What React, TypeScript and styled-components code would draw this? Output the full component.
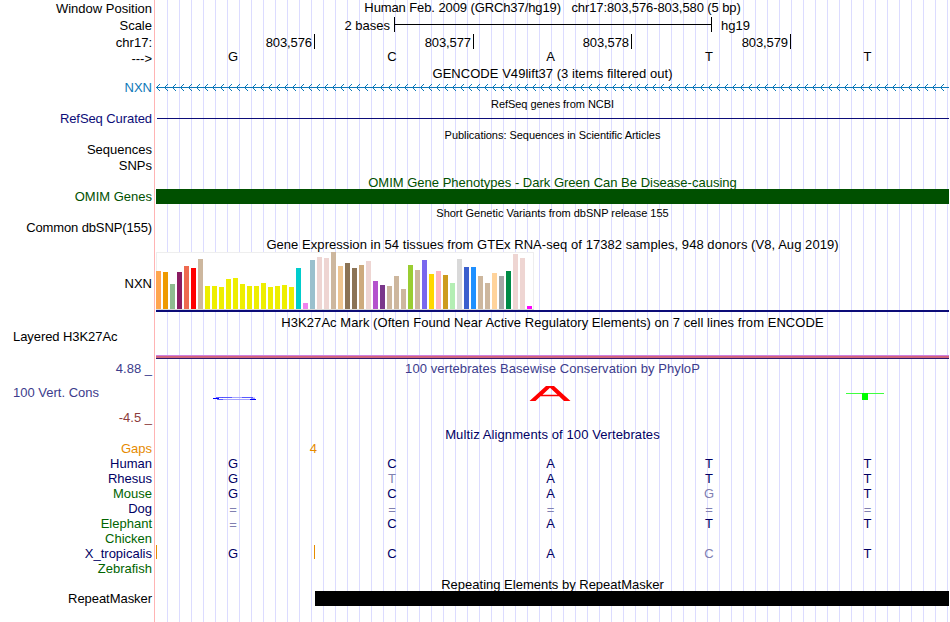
import type { ReactNode } from 'react'
import styled, { createGlobalStyle } from 'styled-components'

const NAVY = '#000064'
const FADED = '#8080b1'
const GREEN = '#006400'
const ORANGE = '#e68a00'
const COLUMNS = '159px 159px 158px 159px 158px'

const GTEX: [number, string][] = [
    [38, '#ffa54f'], [37, '#ee9a00'], [25, '#8fbc8f'], [37, '#8b1c62'], [43, '#ee6a50'], [41, '#ff0000'],
    [50, '#cdb79e'], [23, '#eeee00'], [23, '#eeee00'], [22, '#eeee00'], [30, '#eeee00'], [31, '#eeee00'],
    [25, '#eeee00'], [23, '#eeee00'], [23, '#eeee00'], [26, '#eeee00'], [22, '#eeee00'], [23, '#eeee00'],
    [24, '#eeee00'], [22, '#eeee00'], [41, '#00cdcd'], [6, '#ee82ee'], [49, '#9ac0cd'], [52, '#eed5d2'],
    [51, '#eed5d2'], [57, '#cdb79e'], [43, '#eec591'], [46, '#8b7355'], [41, '#8b7355'], [44, '#cdaa7d'],
    [48, '#eed5d2'], [28, '#b452cd'], [24, '#7a378b'], [23, '#cdb79e'], [33, '#cdb79e'], [20, '#cdb79e'],
    [44, '#9acd32'], [39, '#cdb79e'], [49, '#7a67ee'], [35, '#ffd700'], [38, '#ffb6c1'], [34, '#cd9b1d'],
    [26, '#b4eeb4'], [50, '#d9d9d9'], [42, '#3a5fcd'], [42, '#1e90ff'], [33, '#cdb79e'], [26, '#cdb79e'],
    [36, '#ffd39b'], [33, '#a6a6a6'], [38, '#008b45'], [55, '#eed5d2'], [51, '#eed5d2'], [3, '#ff00ff'],
]

// lower case marks a base that differs from human
const SPECIES = [
    { name: 'Human', color: NAVY, bases: 'GCATT' },
    { name: 'Rhesus', color: NAVY, bases: 'GtATT' },
    { name: 'Mouse', color: GREEN, bases: 'GCAgT' },
    { name: 'Dog', color: NAVY, bases: '=====' },
    { name: 'Elephant', color: GREEN, bases: '=CATT' },
    { name: 'Chicken', color: GREEN, bases: '' },
    { name: 'X_tropicalis', color: NAVY, bases: 'GCAcT', gaps: true },
    { name: 'Zebrafish', color: GREEN, bases: '' },
]

type RowProps = {
    height: number
    label?: string
    color?: string
    drop?: number
    left?: boolean
    spacing?: number
    children?: ReactNode
}

const Row = ({ height, label, color, drop, left, spacing, children }: RowProps) => (
    <RowWrap $height={height}>
        <Label $color={color} $drop={drop} $left={left} $spacing={spacing}>{label}</Label>
        <Plot>{children}</Plot>
    </RowWrap>
)

const Bases = ({ bases, color }: { bases: string; color?: string }) => (
    <BaseGrid>
        {bases.split('').map((b, i) => (
            <Base key={i} $drop={b === '=' ? 1 : 0} $color={b === '=' || b !== b.toUpperCase() ? FADED : color}>
                {b.toUpperCase()}
            </Base>
        ))}
    </BaseGrid>
)

const Arrows = () => (
    <Drawing width="793" height="15" shapeRendering="crispEdges">
        <defs>
            <pattern id="intron" width="8" height="15" patternUnits="userSpaceOnUse">
                <path d="M0 7h8v1h-8zM1 6h1v1h-1zM2 5h1v1h-1zM3 4h1v1h-1zM1 8h1v1h-1zM2 9h1v1h-1zM3 10h1v1h-1z" fill="#0c78b8" />
            </pattern>
        </defs>
        <rect width="793" height="15" fill="url(#intron)" />
    </Drawing>
)

const Logos = () => (
    <Drawing width="793" height="25">
        <path d="M62 12.500H96M62 14.500H94" stroke="#9a9aff" strokeWidth="0.9" />
        <path d="M66 12.500H76M86 12.500H97" stroke="#5050ff" strokeWidth="0.9" />
        <path d="M57 13.500H63M94 14.500H100" stroke="#0000ff" strokeWidth="1.2" />
        <path d="M60 12.500H67M61 14.500H67M95 13.200H99" stroke="#4646ff" strokeWidth="0.8" />
        <path d="M373.500 16L390 1H398L414.500 16H408L403 11.300H384.500L379.500 16ZM386.500 9.700H401.500L394 2.800Z" fill="#ff0000" fillRule="evenodd" />
        <path d="M690 8h38v1h-38z" fill="#40ff40" />
        <path d="M706 8h6v7h-6z" fill="#00ff00" />
    </Drawing>
)

const App = () => {
    return <Page>
        <GlobalStyle />
        <Row height={17} label="Window Position" drop={1}>
            <Title $spacing={-0.1}>Human Feb. 2009 (GRCh37/hg19)&nbsp;&nbsp; chr17:803,576-803,580 (5 bp)</Title>
        </Row>
        <Row height={17} label="Scale" drop={1}>
            <Scale>
                <ScaleText $width={234}>2 bases</ScaleText>
                <ScaleBar />
                <ScaleText $width={60}>hg19</ScaleText>
            </Scale>
        </Row>
        <Row height={15} label="chr17:" drop={1}>
            <Ticks>
                <Tick>803,576</Tick>
                <Tick>803,577</Tick>
                <Tick>803,578</Tick>
                <Tick>803,579</Tick>
            </Ticks>
        </Row>
        <Row height={17} label="--->" drop={2}>
            <Bases bases="GCATT" />
        </Row>

        <Row height={14}><Title $spacing={0.04}>GENCODE V49lift37 (3 items filtered out)</Title></Row>
        <Row height={18} label="NXN" color="#0c78b8"><Arrows /></Row>

        <Row height={13}><Title $small $spacing={-0.05}>RefSeq genes from NCBI</Title></Row>
        <Row height={18} label="RefSeq Curated" color="#0c0c78" spacing={-0.08}><RefSeqLine /></Row>

        <Row height={13}><Title $small $spacing={-0.04}>Publications: Sequences in Scientific Articles</Title></Row>
        <Row height={16} label="Sequences" />
        <Row height={17} label="SNPs" />

        <Row height={14}><Title $color="#005000">OMIM Gene Phenotypes - Dark Green Can Be Disease-causing</Title></Row>
        <Row height={18} label="OMIM Genes" color="#005000"><Block $color="#005000" /></Row>

        <Row height={13}><Title $small $spacing={-0.02}>Short Genetic Variants from dbSNP release 155</Title></Row>
        <Row height={17} label="Common dbSNP(155)" spacing={-0.12} />

        <Row height={15}><Title $spacing={0.055}>Gene Expression in 54 tissues from GTEx RNA-seq of 17382 samples, 948 donors (V8, Aug 2019)</Title></Row>
        <Row height={63} label="NXN" drop={24}>
            <Chart>
                {GTEX.map(([height, color], i) => (
                    <Tissue key={i} style={{ height, background: color }} />
                ))}
            </Chart>
            <GeneModel />
        </Row>

        <Row height={14}><Title $spacing={0.055}>H3K27Ac Mark (Often Found Near Active Regulatory Elements) on 7 cell lines from ENCODE</Title></Row>
        <Row height={32} label="Layered H3K27Ac" left spacing={-0.07}><Signal /></Row>

        <Row height={24} label="4.88 _" color="#3c3c8c"><Title $color="#3c3c8c" $spacing={0.06}>100 vertebrates Basewise Conservation by PhyloP</Title></Row>
        <Row height={25} label="100 Vert. Cons" color="#3c3c8c" left><Logos /></Row>
        <Row height={17} label="-4.5 _" color="#8c3c3c" />

        <Row height={14}><Title $color={NAVY} $spacing={0.1}>Multiz Alignments of 100 Vertebrates</Title></Row>
        <Row height={15} label="Gaps" color={ORANGE}><Gap>4</Gap></Row>
        {SPECIES.map(s => (
            <Row key={s.name} height={15} label={s.name} color={s.color}>
                {s.gaps && <Inserts><i /><i /></Inserts>}
                <Bases bases={s.bases} color={NAVY} />
            </Row>
        ))}

        <Row height={15}><Title $drop={1}>Repeating Elements by RepeatMasker</Title></Row>
        <Row height={31} label="RepeatMasker" spacing={-0.05}><Block $color="#000" $start={159} /></Row>
    </Page>
}

export default App

const GlobalStyle = createGlobalStyle`
    body {
        margin: 0;
        background: #fff;
        overflow: hidden;
    }
`

const Page = styled.div`
    width: 950px;
    height: 622px;
    overflow: hidden;
    display: flex;
    flex-direction: column;
    font: 13px/15px "Liberation Sans", Arial, sans-serif;
    color: #000;
    white-space: nowrap;
    background:
        linear-gradient(#ffb4b4, #ffb4b4) 154px 0 / 1px 100% no-repeat,
        repeating-linear-gradient(to right, #dcdcff 0 1px, transparent 1px 12px) 167px 0 / 783px 100% no-repeat,
        #fff;
`
const RowWrap = styled.div<{ $height: number }>`
    height: ${p => p.$height}px;
    flex: none;
    display: grid;
    grid-template-columns: 156px 793px;
`
const Label = styled.div<{ $color?: string; $drop?: number; $left?: boolean; $spacing?: number }>`
    padding: ${p => p.$drop || 0}px ${p => p.$left ? 0 : 4}px 0 ${p => p.$left ? 13 : 0}px;
    text-align: ${p => p.$left ? 'left' : 'right'};
    letter-spacing: ${p => p.$spacing || 0}px;
    color: ${p => p.$color || '#000'};
`
const Plot = styled.div`
    position: relative;
    min-width: 0;
`
const Title = styled.div<{ $small?: boolean; $color?: string; $drop?: number; $spacing?: number }>`
    padding-top: ${p => p.$drop || 0}px;
    text-align: center;
    letter-spacing: ${p => p.$spacing || 0}px;
    color: ${p => p.$color || '#000'};
    ${p => p.$small && 'font-size: 11px; line-height: 13px;'}
`
const Scale = styled.div`
    display: flex;
    gap: 4px;
    > :last-child {
        text-align: left;
        padding-left: 5px;
    }
`
const ScaleText = styled.div<{ $width: number }>`
    width: ${p => p.$width}px;
    padding-top: 1px;
    text-align: right;
`
const ScaleBar = styled.div`
    box-sizing: border-box;
    width: 318px;
    height: 15px;
    border: solid #000;
    border-width: 0 1px;
    background: linear-gradient(#000, #000) 0 7px / 100% 1px no-repeat;
`
const Ticks = styled.div`
    display: grid;
    grid-template-columns: ${COLUMNS};
`
const Tick = styled.div`
    height: 14px;
    padding: 1px 2px 0 0;
    border-right: 1px solid #000;
    text-align: right;
    letter-spacing: -0.1px;
`
const BaseGrid = styled.div`
    display: grid;
    grid-template-columns: ${COLUMNS};
`
const Base = styled.div<{ $color?: string; $drop: number }>`
    height: 15px;
    box-sizing: border-box;
    padding: ${p => p.$drop}px 5px 0 0;
    text-align: center;
    color: ${p => p.$color || '#000'};
`
const Drawing = styled.svg`
    display: block;
`
const RefSeqLine = styled.div`
    height: 1px;
    margin: 7px 0 0 1px;
    background: #0c0c78;
`
const Block = styled.div<{ $color: string; $start?: number }>`
    height: 15px;
    margin-left: ${p => p.$start || 0}px;
    background: ${p => p.$color};
`
const Chart = styled.div`
    box-sizing: border-box;
    width: 378px;
    height: 58px;
    display: flex;
    align-items: flex-end;
    gap: 2px;
    background:
        linear-gradient(#eee, #eee) 0 0 / 100% 1px no-repeat,
        linear-gradient(#eee, #eee) 0 0 / 1px 100% no-repeat,
        linear-gradient(#eee, #eee) 100% 0 / 1px 100% no-repeat,
        #fff;
    border-bottom: 1px solid #d8d8d8;
`
const Tissue = styled.div`
    width: 5px;
    flex: none;
`
const GeneModel = styled.div`
    height: 2px;
    background: #0c0c78;
`
const Signal = styled.div`
    height: 4px;
    margin-top: 26px;
    background: linear-gradient(#cf7fdf 0 1px, #d2647d 1px 3px, #30186b 3px);
`
const Gap = styled.div`
    width: 161px;
    text-align: right;
    color: ${ORANGE};
`
const Inserts = styled.div`
    position: absolute;
    inset: -1px 0 0 0;
    display: flex;
    gap: 157px;
    i {
        width: 1px;
        height: 14px;
        background: ${ORANGE};
    }
`
